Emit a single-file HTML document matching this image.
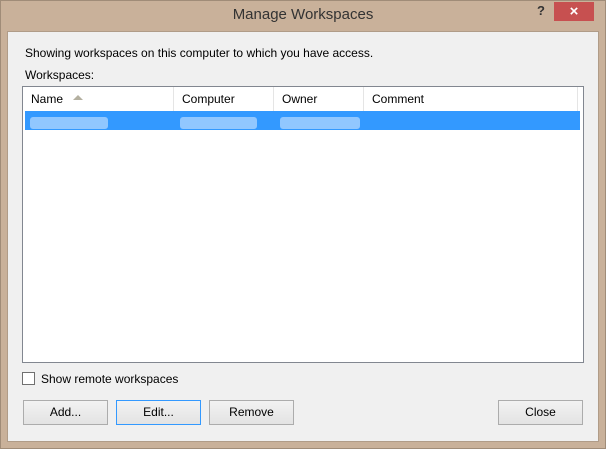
<!DOCTYPE html>
<html><head><style>
*{margin:0;padding:0;box-sizing:border-box}
body{width:606px;height:449px;background:#c9b19a;position:relative;font-family:"Liberation Sans",sans-serif;font-size:12px;color:#000;overflow:hidden}
.abs{position:absolute}
.frame{left:0;top:0;width:606px;height:449px;border:1px solid #a08c78}
.title{left:0;top:6px;width:606px;text-align:center;font-size:15px;color:#333}
.client{left:7px;top:31px;width:592px;height:411px;background:#f0f0f0;border:1px solid #b09c88}
.btn{height:25px;width:85px;background:linear-gradient(#f2f2f2,#e3e3e3);border:1px solid #acacac;text-align:center;line-height:23px;font-size:12px}
.list{left:22px;top:86px;width:562px;height:277px;background:#fff;border:1px solid #828790}
.hd{top:0;height:24px;line-height:24px;padding-left:8px;border-right:1px solid #e5e5e5}
.blur{top:117px;height:12px;background:#a9d2ff;border-radius:3px;opacity:.8}
</style></head><body>
<div class="abs frame"></div>
<div class="abs title">Manage Workspaces</div>
<div class="abs" style="left:537px;top:3px;font-weight:bold;font-size:13px;color:#333">?</div>
<div class="abs" style="left:554px;top:2px;width:40px;height:19px;background:#c75050;color:#fff;text-align:center;line-height:19px;font-size:15px;font-weight:bold">×</div>
<div class="abs client"></div>
<div class="abs" style="left:25px;top:46px">Showing workspaces on this computer to which you have access.</div>
<div class="abs" style="left:25px;top:68px">Workspaces:</div>
<div class="abs list">
 <div class="abs hd" style="left:0;width:151px">Name</div>
 <div class="abs" style="left:50px;top:5px;width:0;height:0;border-left:5px solid transparent;border-right:5px solid transparent;border-bottom:5px solid #b4b0a0;margin-top:3px"></div>
 <div class="abs hd" style="left:151px;width:100px">Computer</div>
 <div class="abs hd" style="left:251px;width:90px">Owner</div>
 <div class="abs hd" style="left:341px;width:214px">Comment</div>
 <div class="abs" style="left:2px;top:24px;width:555px;height:19px;background:#3399ff"></div>
</div>
<div class="abs blur" style="left:30px;width:78px"></div>
<div class="abs blur" style="left:180px;width:77px"></div>
<div class="abs blur" style="left:280px;width:80px"></div>
<div class="abs" style="left:22px;top:372px;width:13px;height:13px;border:1px solid #707070;background:#fff"></div>
<div class="abs" style="left:41px;top:372px">Show remote workspaces</div>
<div class="abs btn" style="left:23px;top:400px">Add...</div>
<div class="abs btn" style="left:116px;top:400px;border-color:#3399ff">Edit...</div>
<div class="abs btn" style="left:209px;top:400px">Remove</div>
<div class="abs btn" style="left:498px;top:400px">Close</div>
</body></html>
